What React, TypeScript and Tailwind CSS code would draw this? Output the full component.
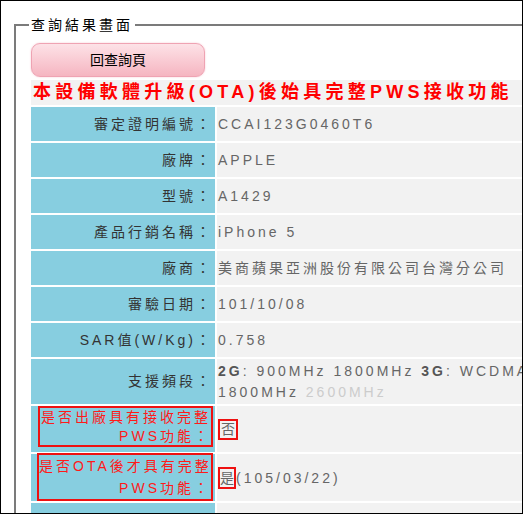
import React from "react";

const rows: [string, string][] = [
  ["審定證明編號：", "CCAI123G0460T6"],
  ["廠牌：", "APPLE"],
  ["型號：", "A1429"],
  ["產品行銷名稱：", "iPhone 5"],
  ["廠商：", "美商蘋果亞洲股份有限公司台灣分公司"],
  ["審驗日期：", "101/10/08"],
  ["SAR值(W/Kg)：", "0.758"],
];

const labelCell = "w-[184px] bg-[#87cee0] p-0 pr-[2px] text-right align-middle text-[#333] tracking-[3px]";
const valueCell = "w-[700px] bg-[#f2f2f2] p-0 pl-[1px] text-left align-middle text-[#666] tracking-[3px]";

export default function App() {
  return (
    <div className="h-[514px] w-[523px] overflow-hidden border border-black bg-white font-['Liberation_Sans','Noto_Sans_CJK_TC',sans-serif] text-[14px]">
      <fieldset className="ml-[13px] mt-[14px] w-[950px] border-2 border-[#7b7b7b] pb-4 pl-[13px] pt-[8px]">
        <legend className="px-[2px] leading-[20px] tracking-[3px] text-black">查詢結果畫面</legend>

        <button
          type="button"
          className="ml-[2px] block h-[34px] w-[174px] rounded-[9px] border border-[#efa3b3] bg-linear-to-b from-[#fde2e7] to-[#f5b5c1] leading-[32px] text-black shadow-[0_0_2px_#f7c4ce]"
        >
          回查詢頁
        </button>

        <table className="mt-[1px] border-separate border-spacing-[2px]">
          <tbody>
            <tr>
              <td colSpan={2} className="h-[25px] bg-[#f2f2f2] p-0 pl-[2px] text-[18px] font-bold leading-[25px] tracking-[4.25px] whitespace-nowrap text-[#ff0000]">
                本設備軟體升級(OTA)後始具完整PWS接收功能
              </td>
            </tr>

            {rows.map(([label, value]) => (
              <tr key={label}>
                <td className={`${labelCell} h-[34px]`}>{label}</td>
                <td className={`${valueCell} h-[34px] whitespace-nowrap`}>{value}</td>
              </tr>
            ))}

            <tr>
              <td className={`${labelCell} h-[45px]`}>支援頻段：</td>
              <td className={`${valueCell} h-[45px] whitespace-nowrap leading-[21px]`}>
                <b className="text-[#555]">2G</b>: 900MHz 1800MHz <b className="text-[#555]">3G</b>: WCDMA 900MHz 2100MHz <b className="text-[#555]">4G</b>: 900MHz
                <br />
                1800MHz <span className="text-[#ccc]">2600MHz</span>
              </td>
            </tr>

            <tr>
              <td className={`${labelCell} h-[46px] !align-top`}>
                <div className="inline-block w-[175px] border-2 border-[#ee1111] text-right leading-[18.5px] whitespace-nowrap text-[#ff1a1a]">
                  是否出廠具有接收完整
                  <br />
                  PWS功能：
                </div>
              </td>
              <td className={`${valueCell} h-[46px]`}>
                <span className="inline-block border-2 border-[#ee1111] px-[1px] leading-[17px] tracking-normal">否</span>
              </td>
            </tr>

            <tr>
              <td className={`${labelCell} h-[47px] !align-top`}>
                <div className="-mt-[1px] inline-block w-[176px] border-2 border-[#ee1111] text-right leading-[22px] whitespace-nowrap text-[#ff1a1a]">
                  是否OTA後才具有完整
                  <br />
                  PWS功能：
                </div>
              </td>
              <td className={`${valueCell} h-[47px] whitespace-nowrap`}>
                <span className="inline-block border-2 border-[#ee1111] leading-[18px] tracking-normal">是</span>
                (105/03/22)
              </td>
            </tr>

            <tr>
              <td className={`${labelCell} h-[34px]`}></td>
              <td className={`${valueCell} h-[34px]`}></td>
            </tr>
          </tbody>
        </table>
      </fieldset>
    </div>
  );
}
